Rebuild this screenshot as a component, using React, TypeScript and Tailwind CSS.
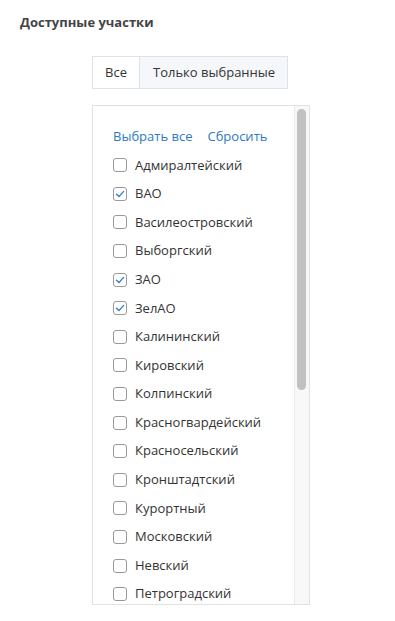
import React from "react";

const items: [string, boolean][] = [
  ["Адмиралтейский", false],
  ["ВАО", true],
  ["Василеостровский", false],
  ["Выборгский", false],
  ["ЗАО", true],
  ["ЗелАО", true],
  ["Калининский", false],
  ["Кировский", false],
  ["Колпинский", false],
  ["Красногвардейский", false],
  ["Красносельский", false],
  ["Кронштадтский", false],
  ["Курортный", false],
  ["Московский", false],
  ["Невский", false],
  ["Петроградский", false],
];

function Box({ checked }: { checked: boolean }) {
  return (
    <span className="w-[14px] h-[14px] rounded-[3px] border border-[#9a9a9a] bg-white flex items-center justify-center shrink-0">
      {checked && (
        <svg width="10" height="10" viewBox="0 0 10 10">
          <path d="M1.5 5.2 L4 7.6 L8.6 2.4" fill="none" stroke="#2f7fd6" strokeWidth="1.4" strokeLinecap="round" strokeLinejoin="round" />
        </svg>
      )}
    </span>
  );
}

export default function App() {
  return (
    <div className="w-[395px] h-[621px] bg-white text-[13px] text-[#333]" style={{ fontFamily: '"Open Sans", sans-serif' }}>
      <div className="pl-[20px] pt-[12px] font-bold text-[#444] text-[13px] leading-[20px]">Доступные участки</div>
      <div className="ml-[92px] mt-[24px] flex w-fit border border-[#dde3ec] h-[33px]">
        <div className="w-[47px] flex items-center justify-center bg-white border-r border-[#dde3ec]">Все</div>
        <div className="pl-[13px] pr-[12px] flex items-center bg-[#f5f7fa]">Только выбранные</div>
      </div>
      <div className="ml-[92px] mt-[16px] w-[218px] h-[500px] border border-[#e2e2e2] flex overflow-hidden">
        <div className="flex-1 overflow-hidden pl-[20px] pt-[20px]">
          <div className="flex gap-[15px] text-[#2d7ac0] h-[22px] items-center">
            <span>Выбрать все</span>
            <span>Сбросить</span>
          </div>
          <div className="mt-[3px]">
            {items.map(([n, c]) => (
              <div key={n} className="h-[28.6px] flex items-center gap-[8px]">
                <Box checked={c} />
                <span className="text-[#333]">{n}</span>
              </div>
            ))}
          </div>
        </div>
        <div className="w-[15px] bg-[#f8f8f8] border-l border-[#e8e8e8] pt-[3px] pl-[2px]">
          <div className="w-[9px] h-[281px] rounded-full bg-[#c1c1c1]" />
        </div>
      </div>
    </div>
  );
}
